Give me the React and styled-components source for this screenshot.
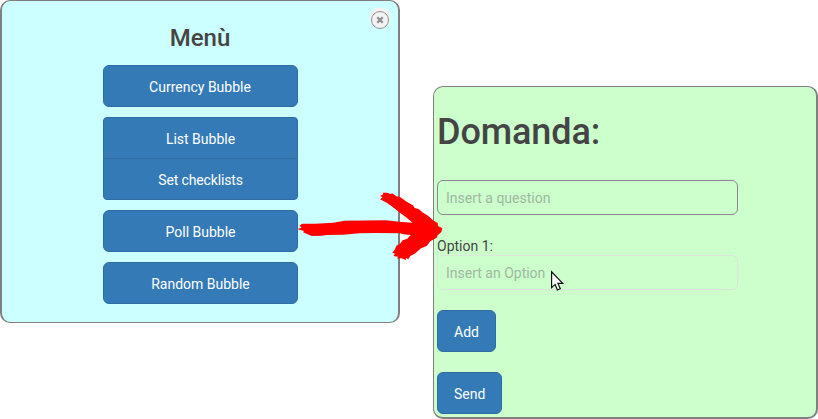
import React from "react";
import styled, { createGlobalStyle } from "styled-components";

const GlobalStyle = createGlobalStyle`
  *, *::before, *::after { box-sizing: border-box; }
  body {
    margin: 0;
    background: #fff;
    color: #444;
    font: 14px/20px Roboto, sans-serif;
    overflow: hidden;
  }
`;

const Stage = styled.main`
  position: relative;
  display: flex;
  align-items: flex-start;
  gap: 33px;
  width: 818px;
  height: 419px;
`;

const Panel = styled.section`
  position: relative;
  border: solid #808080;
  border-radius: 10px;
`;

const MenuPanel = styled(Panel)`
  display: flex;
  flex-direction: column;
  align-items: center;
  width: 400px;
  height: 323px;
  padding-top: 24px;
  border-width: 1px 2px;
  background: #cff;
`;

const QuestionPanel = styled(Panel)`
  width: 385px;
  height: 333px;
  margin-top: 86px;
  padding: 25px 0 0 3px;
  border-width: 1px 2px 2px 1px;
  background: #cfc;
`;

const MenuTitle = styled.h2`
  margin: 0 0 14px;
  font-size: 24px;
  line-height: 26px;
  font-weight: 500;
`;

const FormTitle = styled.h1`
  margin: 0 0 28px;
  font-size: 36px;
  line-height: 40px;
  font-weight: 500;
  letter-spacing: -0.1px;
`;

const MenuList = styled.nav`
  display: flex;
  flex-direction: column;
  gap: 10px;
  width: 195px;
`;

const Button = styled.button`
  display: block;
  height: 42px;
  padding: 1px 16px 0;
  border: 1px solid #2e6da4;
  border-radius: 6px;
  background: #337ab7;
  color: #fff;
  font: 14px/20px Roboto, sans-serif;
  letter-spacing: ${(p) => p.$tracking || "normal"};
`;

const MenuButton = styled(Button)`
  padding-left: 17px;
`;

const ButtonGroup = styled.div`
  display: flex;
  flex-direction: column;

  ${Button}:first-child { border-radius: 4px 4px 0 0; }
  ${Button}:last-child { margin-top: -1px; border-radius: 0 0 4px 4px; }
`;

const CloseButton = styled.button`
  position: absolute;
  top: 10px;
  right: 9px;
  display: grid;
  place-items: center;
  width: 18px;
  height: 18px;
  padding: 0;
  border: 1px solid #929292;
  border-radius: 50%;
  background: #f2f2f2;
  box-shadow: 0 -2px 0 1.5px #f2f2f2;
`;

const Field = styled.input`
  display: block;
  width: 301px;
  height: 35px;
  padding: 1px 8px 0;
  border: 1px solid ${(p) => p.$line};
  border-radius: 6px;
  background: transparent;
  font: 14px/20px Roboto, sans-serif;

  &::placeholder { color: #9fb99f; opacity: 1; }
`;

const Label = styled.label`
  display: block;
  height: 19px;
  margin-top: 21px;
`;

const Actions = styled.div`
  display: flex;
  flex-direction: column;
  align-items: flex-start;
  gap: 20px;
  margin-top: 20px;
`;

const Arrow = styled.svg`
  position: absolute;
  left: 290px;
  top: 180px;
  pointer-events: none;
`;

const Pointer = styled.svg`
  position: absolute;
  left: 550px;
  top: 270px;
  pointer-events: none;
`;

export default function App() {
  return (
    <>
      <GlobalStyle />
      <Stage>
        <MenuPanel>
          <CloseButton aria-label="Close">
            <svg width="8" height="8" viewBox="0 0 8 8">
              <path d="M1.3 1.3 6.7 6.7M6.7 1.3 1.3 6.7" stroke="#8c8c8c" strokeWidth="2.3" />
            </svg>
          </CloseButton>
          <MenuTitle>Menù</MenuTitle>
          <MenuList>
            <Button>Currency Bubble</Button>
            <ButtonGroup>
              <MenuButton>List Bubble</MenuButton>
              <MenuButton $tracking="-0.14px">Set checklists</MenuButton>
            </ButtonGroup>
            <MenuButton>Poll Bubble</MenuButton>
            <MenuButton>Random Bubble</MenuButton>
          </MenuList>
        </MenuPanel>
        <QuestionPanel>
          <FormTitle>Domanda:</FormTitle>
          <Field $line="#8e858e" placeholder="Insert a question" />
          <Label htmlFor="option-1">Option 1:</Label>
          <Field id="option-1" $line="#d9e6d9" placeholder="Insert an Option" />
          <Actions>
            <Button>Add</Button>
            <Button>Send</Button>
          </Actions>
        </QuestionPanel>
        <Arrow width="160" height="90" viewBox="0 0 480 270">
          <path
            fill="#f00"
            d="M23 148 35 142 28 138 36 131 75 131 130 128 163 122 288 121 327 125 368 128 346 110 330 98 305 79 290 68 270 58 278 52 270 48 280 43 278 38 291 38 302 42 307 40 319 49 329 50 350 65 369 76 374 84 386 87 397 97 414 107 429 121 443 129 444 138 457 145 454 156 443 166 440 173 421 184 410 198 393 205 374 221 361 228 355 238 349 234 347 240 334 235 322 236 324 230 310 228 315 221 307 218 315 208 319 197 330 191 338 181 352 176 362 165 340 163 330 160 260 159 208 160 160 164 110 165 96 167 65 168 39 157 42 153Z"
          />
        </Arrow>
        <Pointer width="16" height="24" viewBox="0 0 16 24">
          <path
            d="M1.6 1.8V17.6L5.1 14.4 7.4 20 10.3 18.8 7.9 13.4H12.7Z"
            fill="#fff"
            stroke="#111"
            strokeWidth="1.2"
          />
        </Pointer>
      </Stage>
    </>
  );
}
